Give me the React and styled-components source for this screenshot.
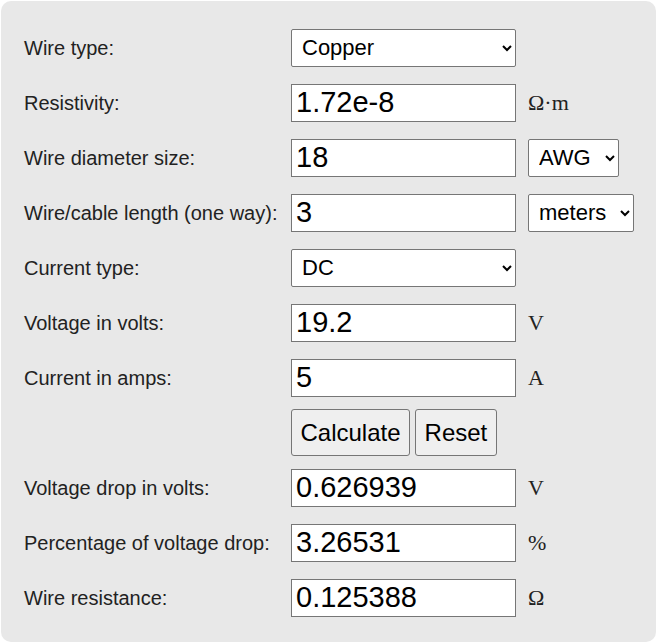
import React from 'react';
import styled, { createGlobalStyle } from 'styled-components';

const GlobalStyle = createGlobalStyle`
  html, body {
    margin: 0;
    padding: 0;
    background: #ffffff;
  }
  body {
    font-family: "Liberation Sans", Arial, sans-serif;
  }
`;

const Panel = styled.div`
  margin: 1px;
  padding: 19px 0 17px 23px;
  background-color: #e8e8e8;
  border-radius: 10px;
  box-sizing: border-box;
  width: calc(100% - 2px);
`;

const Row = styled.div`
  display: grid;
  grid-template-columns: 267px 225px auto;
  align-items: center;
  height: 55px;
`;

const Label = styled.label`
  font-size: 20px;
  color: #222;
  white-space: nowrap;
  padding-top: 1px;
`;

const Field = styled.input`
  box-sizing: border-box;
  width: 225px;
  height: 38px;
  margin: 0;
  padding: 1px 4px;
  border: 1px solid #767676;
  border-radius: 0;
  background: #fff;
  color: #000;
  font-family: "Liberation Sans", Arial, sans-serif;
  font-size: 29px;
  outline: none;
`;

const Select = styled.select`
  box-sizing: border-box;
  width: ${props => props.w || 225}px;
  height: 38px;
  margin: 0 0 0 ${props => props.offset || 0}px;
  padding: 0 6px 0 6px;
  border: 1px solid #767676;
  border-radius: 2px;
  background: #fff;
  color: #000;
  font-family: "Liberation Sans", Arial, sans-serif;
  font-size: 22px;
`;

const Unit = styled.span`
  margin-left: 12px;
  font-family: "Liberation Serif", "Times New Roman", serif;
  font-size: 22px;
  color: #222;
`;

const Buttons = styled.div`
  display: flex;
  gap: 5px;
`;

const Button = styled.button`
  box-sizing: border-box;
  height: 47px;
  padding: 0 8.5px;
  border: 1px solid #767676;
  border-radius: 3px;
  background: #efefef;
  color: #000;
  font-family: "Liberation Sans", Arial, sans-serif;
  font-size: 24px;
  cursor: pointer;
`;

const App = () => {
  return (
    <>
      <GlobalStyle />
      <Panel>
        <Row>
          <Label>Wire type:</Label>
          <Select defaultValue="copper">
            <option value="copper">Copper</option>
            <option value="aluminum">Aluminum</option>
          </Select>
        </Row>
        <Row>
          <Label>Resistivity:</Label>
          <Field defaultValue="1.72e-8" />
          <Unit>Ω·m</Unit>
        </Row>
        <Row>
          <Label>Wire diameter size:</Label>
          <Field defaultValue="18" />
          <Select w={91} offset={12} defaultValue="awg">
            <option value="awg">AWG</option>
            <option value="mm">mm</option>
          </Select>
        </Row>
        <Row>
          <Label>Wire/cable length (one way):</Label>
          <Field defaultValue="3" />
          <Select w={106} offset={12} defaultValue="meters">
            <option value="meters">meters</option>
            <option value="feet">feet</option>
          </Select>
        </Row>
        <Row>
          <Label>Current type:</Label>
          <Select defaultValue="dc">
            <option value="dc">DC</option>
            <option value="ac1">AC single phase</option>
          </Select>
        </Row>
        <Row>
          <Label>Voltage in volts:</Label>
          <Field defaultValue="19.2" />
          <Unit>V</Unit>
        </Row>
        <Row>
          <Label>Current in amps:</Label>
          <Field defaultValue="5" />
          <Unit>A</Unit>
        </Row>
        <Row>
          <span />
          <Buttons>
            <Button>Calculate</Button>
            <Button>Reset</Button>
          </Buttons>
        </Row>
        <Row>
          <Label>Voltage drop in volts:</Label>
          <Field defaultValue="0.626939" />
          <Unit>V</Unit>
        </Row>
        <Row>
          <Label>Percentage of voltage drop:</Label>
          <Field defaultValue="3.26531" />
          <Unit>%</Unit>
        </Row>
        <Row>
          <Label>Wire resistance:</Label>
          <Field defaultValue="0.125388" />
          <Unit>Ω</Unit>
        </Row>
      </Panel>
    </>
  );
};

export default App;
